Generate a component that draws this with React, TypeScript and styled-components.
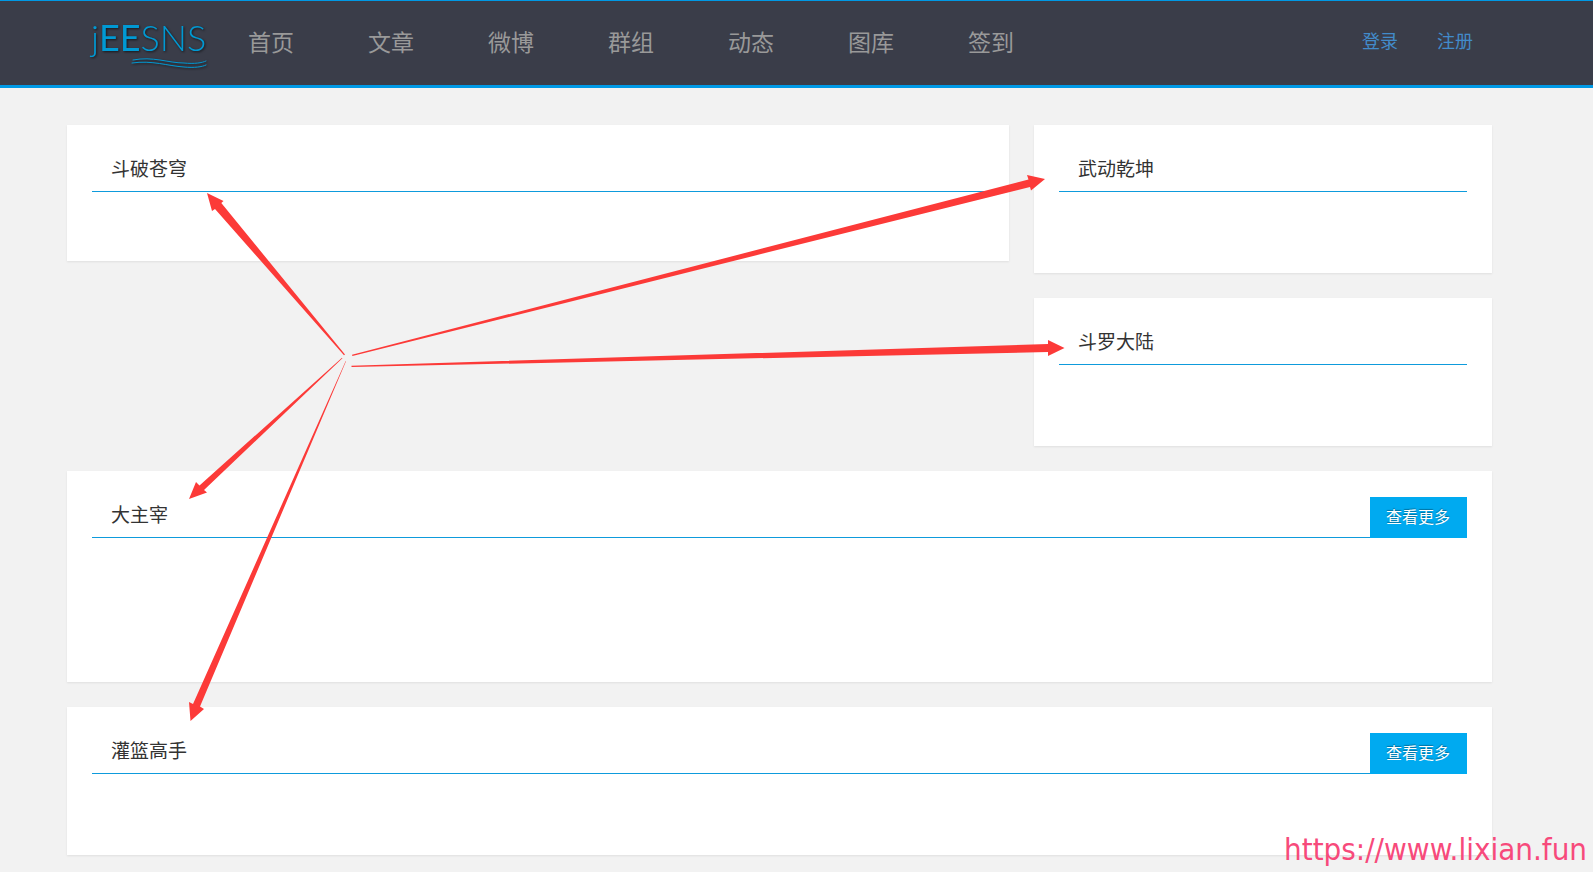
import React from "react";
import styled, { createGlobalStyle } from "styled-components";

const GlobalStyle = createGlobalStyle`
  *, *::before, *::after { box-sizing: border-box; }
  body {
    margin: 0;
    background: #f2f2f2;
    color: #333;
    font-family: "Noto Sans CJK SC", sans-serif;
    font-weight: 400;
  }
`;

const Page = styled.div`
  position: relative;
  min-height: 100vh;
  overflow: hidden;
`;

const Header = styled.header`
  display: flex;
  align-items: center;
  height: 88px;
  padding: 0 101px 0 90px;
  background: #3a3d49;
  border-top: 1px solid #0099e5;
  border-bottom: 3px solid #0099e5;
`;

const LogoLink = styled.a`
  flex: none;
  width: 121px;
  height: 56px;
  text-decoration: none;
`;

const LogoDrawing = styled.svg`
  display: block;
  overflow: visible;
  filter: drop-shadow(1px 1px 1px rgba(0, 0, 0, 0.6));
`;

const Nav = styled.nav`
  display: flex;
  flex: 1;
`;

const NavLink = styled.a`
  padding: 0 37px 4px;
  font-size: 23px;
  line-height: 80px;
  color: #999;
  text-decoration: none;
  white-space: nowrap;
`;

const Account = styled.div`
  display: flex;
  gap: 39px;
  padding-right: 19px;
`;

const AccountLink = styled.a`
  padding-bottom: 6px;
  font-size: 18px;
  line-height: 78px;
  color: #428bca;
  text-decoration: none;
  white-space: nowrap;
`;

const Main = styled.main`
  display: flex;
  flex-direction: column;
  gap: 25px;
  padding: 37px 101px 17px 67px;
`;

const Columns = styled.div`
  display: grid;
  grid-template-columns: 942fr 458fr;
  gap: 25px;
  align-items: start;
`;

const Side = styled.div`
  display: flex;
  flex-direction: column;
  gap: 25px;
`;

const Panel = styled.section`
  padding: 25px;
  background: #fff;
  box-shadow: 0 1px 2px rgba(0, 0, 0, 0.08);
`;

const PanelHead = styled.div`
  display: flex;
  justify-content: space-between;
  height: 42px;
  padding-left: 19px;
  border-bottom: 1px solid #0e9bdc;
`;

const PanelTitle = styled.h2`
  margin: 0;
  font-size: 19px;
  font-weight: 400;
  line-height: 36px;
`;

const PanelBody = styled.div<{ $space: number }>`
  min-height: ${(p) => p.$space}px;
`;

const MoreButton = styled.button`
  height: 41px;
  margin-top: 1px;
  padding: 0 17px 3px 16px;
  border: 0;
  background: #00aaf0;
  color: #fff;
  font-family: inherit;
  font-size: 16px;
  font-weight: 400;
  text-shadow: 0 -1px 1px rgba(0, 0, 0, 0.35);
  cursor: pointer;
`;

const Arrows = styled.svg`
  position: absolute;
  top: 0;
  left: 0;
  pointer-events: none;
`;

const Watermark = styled.div`
  position: absolute;
  right: 6px;
  bottom: 4px;
  font-family: "DejaVu Sans Condensed", "DejaVu Sans", sans-serif;
  font-stretch: condensed;
  font-size: 31px;
  font-weight: 400;
  line-height: 38px;
  color: #f74a7b;
`;

const navItems = ["首页", "文章", "微博", "群组", "动态", "图库", "签到"];

function Logo() {
  return (
    <LogoLink href="#" aria-label="JEESNS">
      <LogoDrawing width="120" height="56" viewBox="90 15 120 56">
        <text x="91" y="51" fill="#0099d3" fontFamily="Lato" fontWeight="300" fontSize="36">
          j<tspan fontWeight="400">EE</tspan>SNS
        </text>
        <g fill="none" stroke="#0099d3" strokeLinecap="round">
          <path d="M133 60 C153 56 168 63 184 63 C194 64 202 63 206 61" strokeWidth="1" />
          <path d="M132 63 C152 60 168 66 184 67 C194 68 202 67 206 65" strokeWidth="1" />
        </g>
      </LogoDrawing>
    </LogoLink>
  );
}

function Block({ title, space, more }: { title: string; space: number; more?: boolean }) {
  return (
    <Panel>
      <PanelHead>
        <PanelTitle>{title}</PanelTitle>
        {more && <MoreButton type="button">查看更多</MoreButton>}
      </PanelHead>
      <PanelBody $space={space} />
    </Panel>
  );
}

export default function App() {
  return (
    <Page>
      <GlobalStyle />
      <Header>
        <Logo />
        <Nav>
          {navItems.map((item) => (
            <NavLink href="#" key={item}>{item}</NavLink>
          ))}
        </Nav>
        <Account>
          <AccountLink href="#">登录</AccountLink>
          <AccountLink href="#">注册</AccountLink>
        </Account>
      </Header>
      <Main>
        <Columns>
          <Block title="斗破苍穹" space={44} />
          <Side>
            <Block title="武动乾坤" space={56} />
            <Block title="斗罗大陆" space={56} />
          </Side>
        </Columns>
        <Block title="大主宰" space={119} more />
        <Block title="灌篮高手" space={56} more />
      </Main>
      <Arrows width="1100" height="740" viewBox="0 0 1100 740" fill="#fc3a38" aria-hidden="true">
        <path d="M207 193 L223.5 201 L221.3 203 L345 354.5 L344 355.2 L215 209 L212 211 Z" />
        <path d="M1045 179 L1027 175 L1028.5 179.5 L352 354.8 L352.4 356 L1030 187 L1031 190.5 Z" />
        <path d="M1064.5 348 L1048 340 L1048 344 L351.5 365.7 L351.5 367 L1048 352 L1048 356 Z" />
        <path d="M189 499 L196 482 L199.5 485.5 L342 357.8 L342.4 358.3 L204 490 L207 492.5 Z" />
        <path d="M190.5 721 L189 702 L193 704 L345.7 361 L346 361.2 L200 706.5 L204 709 Z" />
      </Arrows>
      <Watermark>https://www.lixian.fun</Watermark>
    </Page>
  );
}
